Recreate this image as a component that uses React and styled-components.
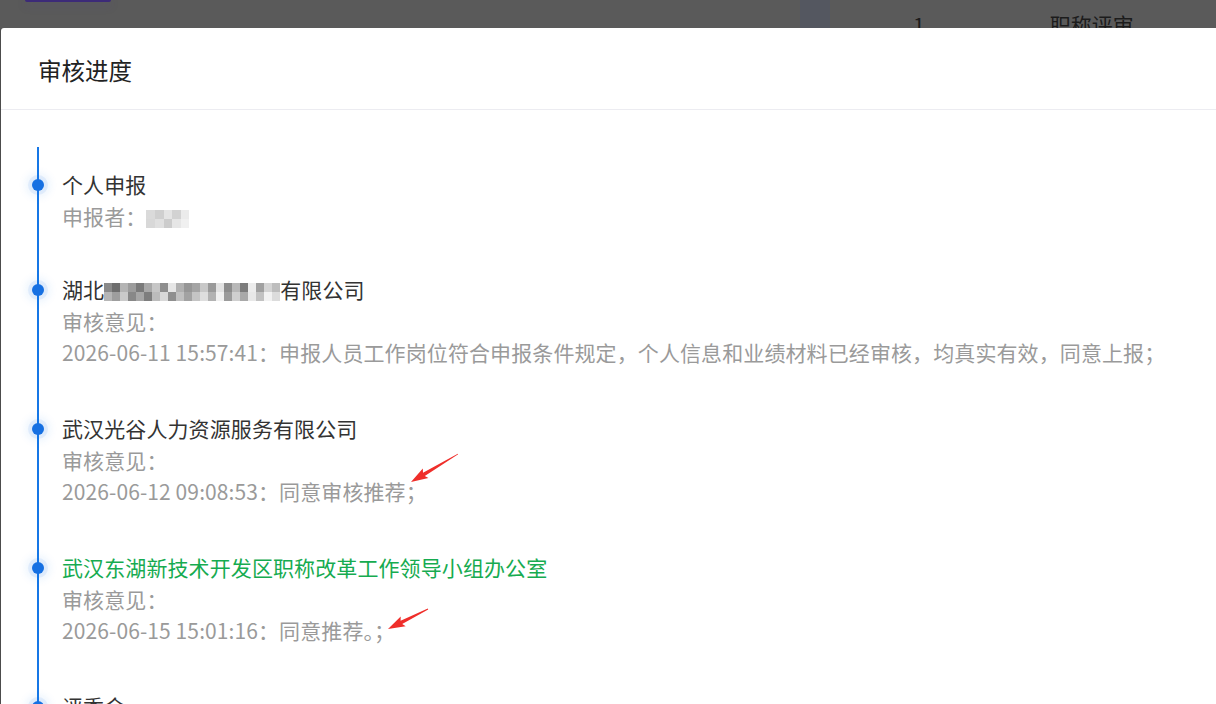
import React from 'react';
import styled, { createGlobalStyle } from 'styled-components';

const GlobalStyle = createGlobalStyle`
    html, body {
        margin: 0;
        padding: 0;
        background: #5a5a5a;
        overflow: hidden;
    }
    body {
        font-family: "Noto Sans CJK SC", "Noto Sans", sans-serif;
    }
`;

const companyShades = [
    '#8a8a8a', '#6e6e6e', '#b4b4b4', '#9c9c9c', '#7a7a7a', '#a8a8a8', '#c6c6c6', '#8e8e8e', '#e6e6e6', '#b0b0b0', '#969696',
    '#a4a4a4', '#c8c8c8', '#9a9a9a', '#e2e2e2', '#8c8c8c', '#b8b8b8', '#7c7c7c', '#ececec', '#a0a0a0', '#d4d4d4', '#bdbdbd',
    '#b6b6b6', '#9e9e9e', '#cacaca', '#888888', '#a6a6a6', '#7e7e7e', '#bcbcbc', '#d8d8d8', '#8f8f8f', '#c0c0c0', '#a2a2a2',
    '#c4c4c4', '#dedede', '#b2b2b2', '#f0f0f0', '#9b9b9b', '#cfcfcf', '#a9a9a9', '#e8e8e8', '#c2c2c2', '#f2f2f2', '#dcdcdc',
];

const nameShades = [
    '#dadada', '#cfcfcf', '#e4e4e4', '#d2d2d2', '#ebebeb',
    '#d8d8d8', '#e0e0e0', '#cccccc', '#e6e6e6', '#f0f0f0',
];

const steps = [
    {
        title: ['个人申报'],
        lines: [['申报者：', { mosaic: nameShades, cols: 5, w: 8.6 }]],
    },
    {
        title: ['湖北', { mosaic: companyShades, cols: 22, w: 8 }, '有限公司'],
        lines: [
            ['审核意见：'],
            ['2026-06-11 15:57:41：申报人员工作岗位符合申报条件规定，个人信息和业绩材料已经审核，均真实有效，同意上报；'],
        ],
    },
    {
        title: ['武汉光谷人力资源服务有限公司'],
        lines: [['审核意见：'], ['2026-06-12 09:08:53：同意审核推荐；']],
    },
    {
        title: ['武汉东湖新技术开发区职称改革工作领导小组办公室'],
        current: true,
        lines: [['审核意见：'], ['2026-06-15 15:01:16：同意推荐。；']],
    },
    {
        title: ['评委会'],
        lines: [],
    },
];

function arrowPoints(tx, ty, hx, hy) {
    const dx = hx - tx;
    const dy = hy - ty;
    const len = Math.hypot(dx, dy);
    const ux = dx / len;
    const uy = dy / len;
    const nx = -uy;
    const ny = ux;
    const headLen = 15;
    const bx = hx - ux * headLen;
    const by = hy - uy * headLen;
    const pts = [
        [tx + nx * 0.4, ty + ny * 0.4],
        [bx + nx * 1.8, by + ny * 1.8],
        [bx + nx * 5.5 - ux * 2, by + ny * 5.5 - uy * 2],
        [hx, hy],
        [bx - nx * 5.5 - ux * 2, by - ny * 5.5 - uy * 2],
        [bx - nx * 1.8, by - ny * 1.8],
        [tx - nx * 0.4, ty - ny * 0.4],
    ];
    return pts.map((p) => p.map((v) => v.toFixed(1)).join(',')).join(' ');
}

function Mosaic({ shades, cols, w }) {
    return (
        <MosaicWrap>
            <MosaicGrid $cols={cols} $w={w}>
                {shades.map((c, i) => (
                    <MosaicCell key={i} $c={c} />
                ))}
            </MosaicGrid>
        </MosaicWrap>
    );
}

function Segments({ parts }) {
    return parts.map((p, i) =>
        typeof p === 'string' ? (
            <React.Fragment key={i}>{p}</React.Fragment>
        ) : (
            <Mosaic key={i} shades={p.mosaic} cols={p.cols} w={p.w} />
        )
    );
}

export default function App() {
    return (
        <Page>
            <GlobalStyle />
            <BehindStrip>
                <PurpleButton />
                <ShadedColumn />
                <BehindCell $gap={83}>1</BehindCell>
                <BehindCell $gap={125}>职称评审</BehindCell>
            </BehindStrip>
            <Modal>
                <ModalHeader>
                    <ModalTitle>审核进度</ModalTitle>
                </ModalHeader>
                <ModalBody>
                    <Timeline>
                        {steps.map((s, i) => (
                            <Item key={i}>
                                <Dot />
                                <ItemTitle $current={s.current}>
                                    <Segments parts={s.title} />
                                </ItemTitle>
                                {s.lines.map((l, j) => (
                                    <ItemLine key={j}>
                                        <Segments parts={l} />
                                    </ItemLine>
                                ))}
                            </Item>
                        ))}
                    </Timeline>
                </ModalBody>
            </Modal>
            <Annotations viewBox="0 0 1216 704">
                <polygon points={arrowPoints(458, 454, 411, 482)} fill="#ef2e2a" />
                <polygon points={arrowPoints(428, 609, 388, 629)} fill="#ef2e2a" />
            </Annotations>
        </Page>
    );
}

const Page = styled.div`
    position: relative;
    width: 1216px;
    height: 704px;
    overflow: hidden;
    background: #5a5a5a;
`;

const BehindStrip = styled.div`
    display: flex;
    align-items: flex-start;
    height: 28px;
    overflow: hidden;
`;

const PurpleButton = styled.div`
    margin-left: 25px;
    width: 86px;
    height: 2px;
    border-radius: 0 0 3px 3px;
    background: #3c2a78;
    box-shadow: 0 3px 8px rgba(86, 70, 150, 0.35);
`;

const ShadedColumn = styled.div`
    margin-left: 689px;
    width: 30px;
    height: 28px;
    background: #545760;
`;

const BehindCell = styled.div`
    margin-left: ${(p) => p.$gap}px;
    padding-top: 12px;
    font-size: 21px;
    line-height: 24px;
    color: #1c1c1c;
    white-space: nowrap;
`;

const Modal = styled.div`
    margin-left: 1px;
    width: 1240px;
    height: 676px;
    background: #fff;
    border-radius: 3px 0 0 0;
    box-shadow: -1px 0 0 rgba(0, 0, 0, 0.15);
`;

const ModalHeader = styled.div`
    display: flex;
    align-items: center;
    box-sizing: border-box;
    height: 82px;
    padding: 2px 37px 0;
    border-bottom: 1px solid #ececf1;
`;

const ModalTitle = styled.h2`
    margin: 0;
    font-size: 23.5px;
    font-weight: 400;
    line-height: 30px;
    color: #222;
`;

const ModalBody = styled.div`
    padding: 37px 0 0 36px;
`;

const Timeline = styled.div`
    display: flex;
    flex-direction: column;
    gap: 44px;
    padding: 21px 0 0 23px;
    border-left: 2px solid #1677e6;
    min-height: 600px;
`;

const Item = styled.div`
    position: relative;

    &:first-child {
        margin-bottom: -3px;
    }
`;

const Dot = styled.span`
    position: absolute;
    left: -30px;
    top: 10.5px;
    width: 12px;
    height: 12px;
    border-radius: 50%;
    background: #1670e2;
    box-shadow: 0 0 0 4px rgba(22, 119, 230, 0.08), 0 0 9px 6px rgba(22, 119, 230, 0.09);
`;

const ItemTitle = styled.div`
    font-size: 21px;
    line-height: 33px;
    letter-spacing: 0.1px;
    color: ${(p) => (p.$current ? '#16ab50' : '#333')};
    white-space: nowrap;
`;

const ItemLine = styled.div`
    font-size: 21px;
    line-height: 31px;
    letter-spacing: 0.1px;
    color: #9a9a9a;
    white-space: nowrap;
`;

const MosaicWrap = styled.span`
    display: inline-block;
    overflow: hidden;
    vertical-align: -3px;
    line-height: 0;
`;

const MosaicGrid = styled.span`
    display: grid;
    grid-template-columns: repeat(${(p) => p.$cols}, ${(p) => p.$w}px);
    grid-auto-rows: 9px;
`;

const MosaicCell = styled.span`
    background: ${(p) => p.$c};
`;

const Annotations = styled.svg`
    position: absolute;
    left: 0;
    top: 0;
    width: 1216px;
    height: 704px;
    pointer-events: none;
`;
